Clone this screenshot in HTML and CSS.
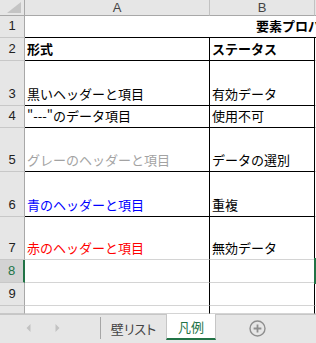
FILE: index.html
```html
<!DOCTYPE html>
<html lang="ja">
<head>
<meta charset="utf-8">
<title>凡例</title>
<link rel="stylesheet" href="styles.css">
</head>
<body>
<div class="app">
  <div class="sheet">
    <div class="corner"><svg width="24" height="15" viewBox="0 0 24 15"><polygon points="7,13 21,13 21,2" fill="#c4c4c4"/></svg></div>
    <div class="colhead">A</div>
    <div class="colhead">B</div>
    <div class="colhead last"></div>

    <div class="rowhead">1</div>
    <div class="cell title">要素プロパティ</div>

    <div class="rowhead">2</div>
    <div class="cell a line bold">形式</div>
    <div class="cell b line bold">ステータス</div>
    <div class="cell c"></div>

    <div class="rowhead">3</div>
    <div class="cell a line">黒いヘッダーと項目</div>
    <div class="cell b line">有効データ</div>
    <div class="cell c"></div>

    <div class="rowhead">4</div>
    <div class="cell a line">"---"のデータ項目</div>
    <div class="cell b line">使用不可</div>
    <div class="cell c"></div>

    <div class="rowhead">5</div>
    <div class="cell a line gray">グレーのヘッダーと項目</div>
    <div class="cell b line">データの選別</div>
    <div class="cell c"></div>

    <div class="rowhead">6</div>
    <div class="cell a line blue">青のヘッダーと項目</div>
    <div class="cell b line">重複</div>
    <div class="cell c"></div>

    <div class="rowhead">7</div>
    <div class="cell a red">赤のヘッダーと項目</div>
    <div class="cell b">無効データ</div>
    <div class="cell c"></div>

    <div class="rowhead active">8</div>
    <div class="cell a"></div>
    <div class="cell b"></div>
    <div class="cell c selected"></div>

    <div class="rowhead">9</div>
    <div class="cell a"></div>
    <div class="cell b"></div>
    <div class="cell c"></div>

    <div class="rowhead"></div>
    <div class="cell a"></div>
    <div class="cell b"></div>
    <div class="cell c"></div>
  </div>

  <div class="tabbar">
    <div class="nav">
      <svg width="5" height="8" viewBox="0 0 5 8"><polygon points="4.5,0 4.5,8 0.5,4" fill="#c2c2c2"/></svg>
      <svg width="5" height="8" viewBox="0 0 5 8"><polygon points="0.5,0 0.5,8 4.5,4" fill="#c2c2c2"/></svg>
    </div>
    <div class="tab">壁リスト</div>
    <div class="tab current">凡例</div>
    <div class="add">
      <svg width="17" height="17" viewBox="0 0 17 17"><circle cx="8.5" cy="8.5" r="7.5" fill="none" stroke="#8f8f8f" stroke-width="1.4"/><path d="M8.5 4.6v7.8M4.6 8.5h7.8" stroke="#8f8f8f" stroke-width="1.8"/></svg>
    </div>
  </div>
</div>
</body>
</html>
```

FILE: styles.css
```css
html, body {
  margin: 0;
  padding: 0;
  background: #ffffff;
}

body {
  width: 316px;
  height: 343px;
  overflow: hidden;
}

.app {
  width: 316px;
  height: 343px;
  display: flex;
  flex-direction: column;
  font-family: "Noto Sans CJK JP", "Noto Sans", sans-serif;
}

.sheet {
  display: grid;
  grid-template-columns: 25px 185px 105px 1fr;
  grid-template-rows: 16px 22px 23px 45px 22px 44px 45px 43px 23px 23px 8px;
  height: 314px;
  overflow: hidden;
}

.sheet > div {
  box-sizing: border-box;
  min-width: 0;
}

.corner {
  background: #e6e6e6;
  border-right: 1px solid #a8a8a8;
  border-bottom: 1px solid #a8a8a8;
  display: flex;
}

.corner svg {
  display: block;
}

.colhead {
  background: #e6e6e6;
  border-right: 1px solid #c2c2c2;
  border-bottom: 1px solid #a8a8a8;
  color: #444444;
  font-family: "Liberation Sans", Arial, sans-serif;
  font-size: 13px;
  line-height: 15px;
  text-align: center;
}

.colhead.last {
  border-right: none;
}

.rowhead {
  background: #e6e6e6;
  border-right: 1px solid #a8a8a8;
  border-bottom: 1px solid #c8c8c8;
  color: #222222;
  font-family: "Liberation Sans", Arial, sans-serif;
  font-size: 13px;
  line-height: 15px;
  display: flex;
  align-items: flex-end;
  justify-content: center;
  padding-bottom: 4px;
}

.rowhead.active {
  background: #d3d3d3;
  color: #217346;
  border-right: 2px solid #217346;
}

.cell {
  background: #ffffff;
  border-bottom: 1px solid #d4d4d4;
  display: flex;
  align-items: flex-end;
  padding: 0 0 3px 2px;
  font-size: 13px;
  line-height: 17px;
  color: #000000;
  white-space: nowrap;
  overflow: hidden;
}

.cell.a,
.cell.b {
  border-right: 1px solid #000000;
}

.cell.line {
  border-bottom-color: #000000;
}

.cell.title {
  grid-column: 2 / span 3;
  border-bottom: 1px solid #000000;
  padding-left: 231px;
  font-weight: bold;
}

.bold {
  font-weight: bold;
}

.gray {
  color: #a3a3a3;
}

.blue {
  color: #0000ff;
}

.red {
  color: #ff0000;
}

.cell.selected {
  position: relative;
  overflow: visible;
}

.cell.selected::before {
  content: "";
  position: absolute;
  left: -1px;
  top: -2px;
  bottom: -2px;
  width: 2px;
  background: #217346;
}

.tabbar {
  height: 29px;
  box-sizing: border-box;
  background: #e6e6e6;
  border-top: 1px solid #c6c6c6;
  display: flex;
  align-items: flex-start;
}

.nav {
  width: 100px;
  height: 28px;
  box-sizing: border-box;
  display: flex;
  align-items: center;
  gap: 24px;
  padding-left: 26px;
  padding-bottom: 2px;
}

.nav svg {
  display: block;
}

.tab {
  box-sizing: border-box;
  width: 66px;
  height: 22px;
  margin-top: 2px;
  border-left: 1px solid #a6a6a6;
  display: flex;
  align-items: center;
  justify-content: center;
  font-size: 13px;
  color: #444444;
  font-feature-settings: "palt";
}

.tab.current {
  width: 50px;
  height: 26px;
  margin-top: -1px;
  background: #ffffff;
  border-left: 1px solid #c6c6c6;
  border-right: 1px solid #c6c6c6;
  border-bottom: 2px solid #217346;
  color: #217346;
  padding-top: 1px;
}

.add {
  flex: 1;
  height: 28px;
  display: flex;
  align-items: center;
  padding-left: 33px;
  padding-bottom: 1px;
  box-sizing: border-box;
}

.add svg {
  display: block;
}
```
